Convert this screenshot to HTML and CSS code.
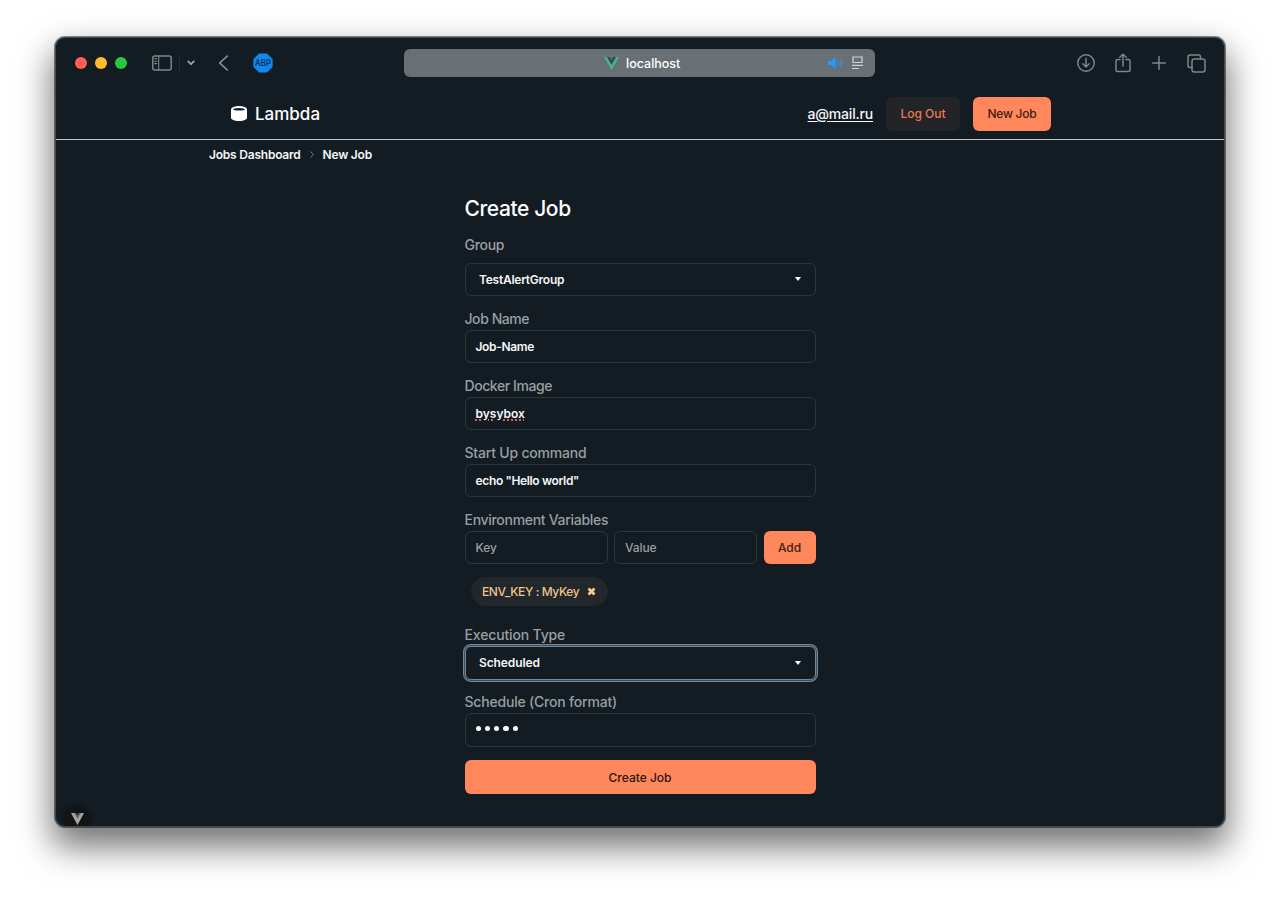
FILE: index.html
```html
<!DOCTYPE html>
<html lang="en">
<head>
<meta charset="utf-8">
<title>Lambda - New Job</title>
<link rel="stylesheet" href="styles.css">
</head>
<body>
<div class="window">
  <div class="toolbar">
    <div class="lights"><i class="red"></i><i class="yellow"></i><i class="green"></i></div>
    <svg class="ic sidebar" width="20" height="16" viewBox="0 0 20 16"><rect x=".8" y=".9" width="18.4" height="14" rx="2"/><path d="M6.700 1v14M2.700 3.800h2M2.700 6.200h2M2.700 8.600h2"/></svg>
    <span class="divider"></span>
    <svg class="ic chevron" width="8" height="6" viewBox="0 0 8 6"><path d="M1.200 1.400 4 4.200 6.800 1.400"/></svg>
    <svg class="ic back" width="11" height="16" viewBox="0 0 11 16"><path d="M9.300 1 1.700 8l7.600 7"/></svg>
    <svg class="abp" width="20" height="20" viewBox="0 0 20 20"><path d="M6 .4h8L19.600 6v8L14 19.600H6L.4 14V6z"/><text x="10" y="12.800" textLength="16" lengthAdjust="spacingAndGlyphs">ABP</text></svg>
    <div class="address">
      <svg class="vue" width="15" height="13" viewBox="0 0 15 13"><path fill="#41b883" d="M0 0h3l4.500 7.700L12 0h3L7.500 13z"/><path fill="#35495e" d="M3 0h2.800l1.700 3L9.200 0H12L7.500 7.700z"/></svg>
      <span class="host">localhost</span>
      <svg class="sound" width="15" height="12" viewBox="0 0 15 12"><path d="M0 4h2.700L7.500.3v11.400L2.700 8H0z"/><path class="wave" d="M9.700 3.500Q11 6 9.700 8.500"/><path class="wave" d="M12.200 1.800Q14.500 6 12.200 10.200"/></svg>
      <svg class="reader" width="11" height="14" viewBox="0 0 11 14"><path d="M1 1h9v5.500H1zM0 9.300h11M0 12.500h7"/></svg>
    </div>
    <svg class="ic download" width="18" height="18" viewBox="0 0 18 18"><circle cx="9" cy="9" r="8.200"/><path d="M9 4.500v8.300M5.800 9.800 9 13l3.200-3.200"/></svg>
    <svg class="ic share" width="16" height="20" viewBox="0 0 16 20"><path d="M5 6.500H2.500Q1 6.500 1 8v9q0 1.500 1.500 1.500h11Q15 18.500 15 17V8q0-1.500-1.500-1.500H11M8 13V1.300M4.800 4.300 8 1.200l3.200 3.100"/></svg>
    <svg class="ic plus" width="14" height="14" viewBox="0 0 14 14"><path d="M7 .7v12.600M.7 7h12.600"/></svg>
    <svg class="ic tabs" width="19" height="19" viewBox="0 0 19 19"><rect x="5" y="5" width="13" height="13" rx="2.200"/><path d="M5 13.500H3Q1 13.500 1 11.500V3q0-2 2-2h8.500q2 0 2 2v2"/></svg>
  </div>
  <header class="header">
    <div class="brand"><svg width="16" height="15" viewBox="0 0 16 15"><path fill="#fff" d="M0 3.500v8.200C0 13.500 3.300 15 8 15s8-1.500 8-3.300V3.500z"/><ellipse cx="8" cy="3.400" rx="8" ry="3.400" fill="#fff"/><ellipse cx="8" cy="3.300" rx="6" ry="1.300" fill="#131c23"/></svg><span>Lambda</span></div>
    <a class="mail">a@mail.ru</a>
    <button class="btn logout">Log Out</button>
    <button class="btn newjob">New Job</button>
  </header>
  <nav class="crumbs"><span>Jobs Dashboard</span><svg width="4" height="7" viewBox="0 0 4 7"><path d="M.5.5l3 3-3 3"/></svg><span class="current">New Job</span></nav>
  <main class="form">
    <h1>Create Job</h1>
    <div class="field group"><label class="l-group">Group</label><div class="input select"><span class="v-group">TestAlertGroup</span><i class="caret"></i></div></div>
    <div class="field"><label class="l-name">Job Name</label><div class="input"><span class="v-name">Job-Name</span></div></div>
    <div class="field"><label class="l-image">Docker Image</label><div class="input"><span class="v-image">bysybox</span></div></div>
    <div class="field"><label class="l-start">Start Up command</label><div class="input"><span class="v-start">echo "Hello world"</span></div></div>
    <div class="field env"><label class="l-env">Environment Variables</label>
      <div class="pair"><div class="input hint"><span class="v-key">Key</span></div><div class="input hint"><span class="v-value">Value</span></div><button class="btn add">Add</button></div>
    </div>
    <div class="chip"><span>ENV_KEY : MyKey</span><svg width="9" height="9" viewBox="0 0 9 9"><path d="M1.500 1.500l6 6M7.500 1.500l-6 6"/></svg></div>
    <div class="field"><label class="l-exec">Execution Type</label><div class="input select focus"><span class="v-exec">Scheduled</span><i class="caret"></i></div></div>
    <div class="field cron"><label class="l-cron">Schedule (Cron format)</label><div class="input dots"><i></i><i></i><i></i><i></i><i></i></div></div>
    <button class="btn create">Create Job</button>
  </main>
  <div class="devtools"><svg width="13" height="12" viewBox="0 0 13 12"><path fill="#a5a7a8" d="M0 0h3.500l3 5 3-5H13L6.500 12z"/><path fill="#68696b" d="M3 0h2l1.500 2.500L8 0h2L6.500 6z"/></svg></div>
</div>
</body>
</html>
```

FILE: styles.css
```css
* { box-sizing: border-box; }
body {
  margin: 0;
  height: 900px;
  padding: 37px 55px;
  overflow: hidden;
  background: #fff;
  font-family: Inter, "Liberation Sans", sans-serif;
  font-weight: 500;
  color: #f5f6f7;
}
.window {
  position: relative;
  width: 1170px;
  height: 790px;
  overflow: hidden;
  background: #131c23;
  border: 1px solid #42484c;
  border-radius: 10px;
  box-shadow: 0 0 0 1px rgba(0,0,0,.45), 0 17px 34px 3px rgba(0,0,0,.55);
}
svg { display: block; flex: none; }
.toolbar { display: flex; align-items: center; height: 50px; padding: 0 18px 0 19px; }
.lights { display: flex; gap: 8px; }
.lights i { width: 12px; height: 12px; border-radius: 50%; }
.red { background: #ff5f57; }
.yellow { background: #febc2e; }
.green { background: #28c840; }
.ic { fill: none; stroke: #7f8589; stroke-width: 1.5; stroke-linecap: round; stroke-linejoin: round; }
.sidebar { margin-left: 25px; }
.sidebar path { stroke-width: 1.1; }
.divider { width: 1px; height: 17px; margin-left: 7px; background: #252c32; }
.chevron { margin-left: 7px; stroke: #a0a4a7; stroke-width: 1.8; }
.back { margin-left: 23px; stroke: #92979a; stroke-width: 1.6; }
.abp { margin-left: 24px; fill: #1088f2; }
.abp text { fill: #10385f; font-size: 8.5px; font-weight: 700; text-anchor: middle; }
.address {
  display: flex;
  align-items: center;
  width: 471px;
  height: 28px;
  margin-left: 131px;
  padding: 0 12px 0 200px;
  border-radius: 6px;
  background: #697075;
}
.host { margin-left: 7px; font-size: 12.500px; color: #fff; }
.sound { margin-left: auto; fill: #209cff; }
.sound .wave { fill: none; stroke: #2b93e8; stroke-width: 1.2; }
.reader { margin-left: 9px; fill: none; stroke: #d2d5d6; stroke-width: 1.2; }
.download { margin-left: auto; }
.share { margin-left: 20px; }
.plus { margin-left: 21px; }
.tabs { margin-left: 21px; }

.header { display: flex; align-items: center; height: 51.500px; padding: 1px 173px 0 175px; border-bottom: 1px solid #c4c7c8; }
.brand { display: flex; align-items: center; gap: 8px; font-size: 17px; color: #fff; }
.mail { margin-left: auto; padding-bottom: 1px; font-size: 14px; letter-spacing: -.200px; text-decoration: underline; text-underline-offset: 2px; }
.btn {
  height: 34px;
  padding: 0;
  border: 0;
  border-radius: 6px;
  background: #ff875b;
  color: #40200f;
  font: 500 12px Inter, sans-serif;
}
.logout { width: 74px; margin-left: 13px; background: #222427; color: #ee7951; }
.newjob { width: 78px; margin-left: 13px; letter-spacing: -.250px; }

.crumbs { display: flex; align-items: center; height: 29px; padding-left: 153px; font-size: 12px; font-weight: 600; letter-spacing: -.220px; }
.crumbs svg { margin: 0 9px; fill: none; stroke: #777d81; }

.form { width: 351px; margin: 25.600px 0 0 408.500px; }
h1 { margin: 0; height: 40px; line-height: 30px; font-size: 21px; font-weight: 500; letter-spacing: -.400px; color: #fff; }
.field { margin-bottom: 11.500px; }
.field label { display: block; height: 22px; line-height: 22px; font-size: 14px; letter-spacing: -.300px; color: #9b9fa1; white-space: nowrap; }
.field .l-name, .field .l-image { letter-spacing: -.430px; }
.field .l-start, .field .l-cron { letter-spacing: -.200px; }
.field .l-exec { letter-spacing: -.150px; }
.group label { height: 28.500px; }
.input {
  display: flex;
  align-items: center;
  height: 33.500px;
  padding: 0 10px;
  border: 1px solid #2b363d;
  border-radius: 6px;
  font-size: 12px;
  font-weight: 600;
  letter-spacing: -.250px;
  white-space: nowrap;
}
.select { justify-content: space-between; padding: 0 14px 0 13.500px; }
.caret { border: 3.500px solid transparent; border-top: 4px solid #fff; border-bottom: 0; }
.focus { border-color: #71889b; box-shadow: 0 0 0 1px #3e4e5b, 0 0 0 2px #71889b; }
.v-name, .v-start { letter-spacing: -.350px; }
.v-image { letter-spacing: 0; text-decoration: underline dotted #e05a5a 1.500px; text-underline-offset: 2px; }
.v-exec { letter-spacing: -.100px; }
.env { margin-bottom: 12.500px; }
.pair { display: grid; grid-template-columns: 143px 143px 52px; justify-content: space-between; }
.hint { color: #9b9fa1; font-weight: 500; letter-spacing: -.100px; }
.add { height: 33.500px; }
.chip {
  display: flex;
  align-items: center;
  justify-content: space-between;
  width: 137px;
  height: 29px;
  margin: 0 0 18.500px 6.500px;
  padding: 0 12px 0 11px;
  border-radius: 15px;
  background: #21272a;
  color: #ecc38a;
  font-size: 12px;
  letter-spacing: -.400px;
  white-space: nowrap;
}
.chip path { stroke: #f5cb91; stroke-width: 2.800; }
.cron { margin-bottom: 13.500px; }
.dots { gap: 4px; padding-bottom: 2px; }
.dots i { width: 5.300px; height: 5.300px; border-radius: 50%; background: #fff; }
.create { display: block; width: 100%; color: #25150e; }
.devtools {
  position: absolute;
  left: 8px;
  bottom: -8px;
  display: flex;
  justify-content: center;
  width: 26px;
  height: 28px;
  padding-top: 7px;
  border-radius: 50%;
  background: #121416;
  box-shadow: 0 0 4px #101214;
}
```
